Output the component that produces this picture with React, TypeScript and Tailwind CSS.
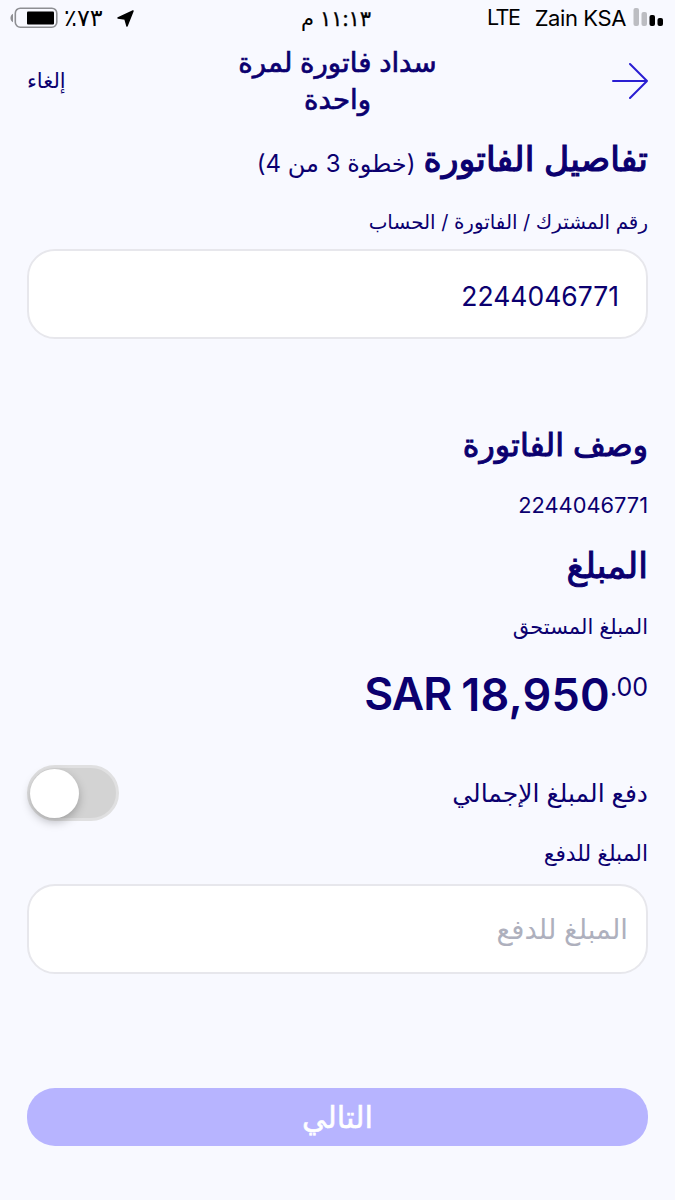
import type { ReactNode } from 'react';

function SignalBars() {
  return (
    <svg width="31" height="20" viewBox="0 0 31 20" className="block">
      <rect x="0.500" y="0" width="5.500" height="18" rx="2" fill="#bcbdc2" />
      <rect x="8.500" y="4" width="5.500" height="14" rx="2" fill="#bcbdc2" />
      <rect x="16.500" y="7" width="5.500" height="11" rx="2" fill="#000" />
      <rect x="24.500" y="10" width="5.500" height="8" rx="2" fill="#000" />
    </svg>
  );
}

function Battery() {
  return (
    <svg width="48" height="22" viewBox="0 0 48 22" className="block">
      <path d="M3 6.800C-0.400 8.500-0.400 13.500 3 15.200Z" fill="#8e8f93" />
      <rect x="5.300" y="1.200" width="41.500" height="19" rx="5" fill="none" stroke="#8e8f93" strokeWidth="1.600" />
      <rect x="17" y="4.500" width="27" height="13" rx="1" fill="#000" />
    </svg>
  );
}

function StatusBar() {
  return (
    <div className="grid h-9 grid-cols-3 items-center text-[22px] leading-none text-black">
      <div className="flex items-center justify-start gap-[7px] pr-[11px] whitespace-nowrap">
        <SignalBars />
        <span dir="ltr" className="tracking-[-0.4px]">Zain KSA</span>
        <span dir="ltr" className="mr-2 text-[21.500px] tracking-[-1.4px]">LTE</span>
      </div>
      <div className="flex items-center justify-center gap-1.5 pr-[3px] text-[21px]">
        <span className="tracking-[-1.8px] [-webkit-text-stroke:0.3px_#000]">١١:١٣</span>
        <span>م</span>
      </div>
      <div dir="ltr" className="flex items-center pl-[10px]">
        <Battery />
        <span className="ml-1.5 text-[24px]">٪٧٣</span>
        <svg width="17" height="17" viewBox="0 0 17 17" className="ml-3.5">
          <path d="M16 1L1 8L8 9L10 16Z" fill="#000" stroke="#000" strokeWidth="1.500" strokeLinejoin="round" />
        </svg>
      </div>
    </div>
  );
}

function Field({ children, className }: { children: ReactNode; className: string }) {
  return (
    <div className={`flex h-[90px] items-center rounded-[28px] border-2 border-[#e7e7ec] bg-white ${className}`}>
      {children}
    </div>
  );
}

export default function App() {
  return (
    <div
      dir="rtl"
      className="h-[1200px] w-[675px] overflow-hidden bg-[#f8f9ff] font-['Inter','DejaVu_Sans',sans-serif] text-[#0b006f]"
    >
      <StatusBar />

      {/* Navigation */}
      <header className="grid h-[90px] grid-cols-[1fr_220px_1fr] items-center px-[27px]">
        <svg width="36" height="38" viewBox="0 0 36 38" fill="none" stroke="#2a1ed2" strokeWidth="2" strokeLinecap="round" strokeLinejoin="round">
          <path d="M1 19H35M18 2L35 19L18 36" />
        </svg>
        <h1 className="text-center text-[27.600px] leading-[37px] [-webkit-text-stroke:0.7px_#0b006f]">سداد فاتورة لمرة واحدة</h1>
        <button className="text-left text-[21px]">إلغاء</button>
      </header>

      <main className="px-[27px]">
        <h2 className="flex h-[68px] items-center gap-2 whitespace-nowrap">
          <span className="pb-1 text-[34.700px] [-webkit-text-stroke:1.2px_#0b006f]">تفاصيل الفاتورة</span>
          <span className="pt-2 text-[24px]">(خطوة 3 من 4)</span>
        </h2>
        <p className="flex h-[55px] items-center pt-0.5 text-[19.900px]">رقم المشترك / الفاتورة / الحساب</p>
        <Field className="pt-1.5 pr-[27px] text-[26.500px]">2244046771</Field>

        <h2 className="mt-[76px] flex h-[60px] items-center text-[31.700px] [-webkit-text-stroke:1px_#0b006f]">وصف الفاتورة</h2>
        <p className="flex h-[60px] items-center text-[21.800px]">2244046771</p>
        <h2 className="flex h-[62px] items-center pb-0.5 text-[35px] [-webkit-text-stroke:1px_#0b006f]">المبلغ</h2>
        <p className="flex h-[60px] items-center text-[21px]">المبلغ المستحق</p>
        <div dir="ltr" className="flex h-[74px] items-start justify-end pt-[15px] leading-none">
          <span className="mr-2.5 text-[44.500px] font-semibold tracking-[-1px]">SAR</span>
          <span className="text-[45px] font-semibold tracking-[0.2px]">18,950</span>
          <span className="pt-[3px] text-[25px]">.00</span>
        </div>

        <div className="mt-[34px] flex h-14 items-center justify-between">
          <span className="pt-0.5 text-[25px]">دفع المبلغ الإجمالي</span>
          <button
            role="switch"
            aria-checked="false"
            className="flex h-[56px] w-[92px] items-center justify-end rounded-full border-[3px] border-[#e0e0e1] bg-[#d3d3d3]"
          >
            <span className="size-[49px] rounded-full bg-white shadow-[0_4px_10px_rgba(0,0,0,0.25)]" />
          </button>
        </div>
        <p className="flex h-[63px] items-center pt-0.5 text-[21.800px]">المبلغ للدفع</p>
        <Field className="pt-0.5 pr-[18px] text-[27.500px] text-[#aeb0bd]">المبلغ للدفع</Field>

        <button className="mt-[114px] flex h-[58px] w-full items-center justify-center rounded-[28px] bg-[#b7b4ff] text-[30.500px] text-white [-webkit-text-stroke:0.5px_#fff]">
          التالي
        </button>
      </main>
    </div>
  );
}
